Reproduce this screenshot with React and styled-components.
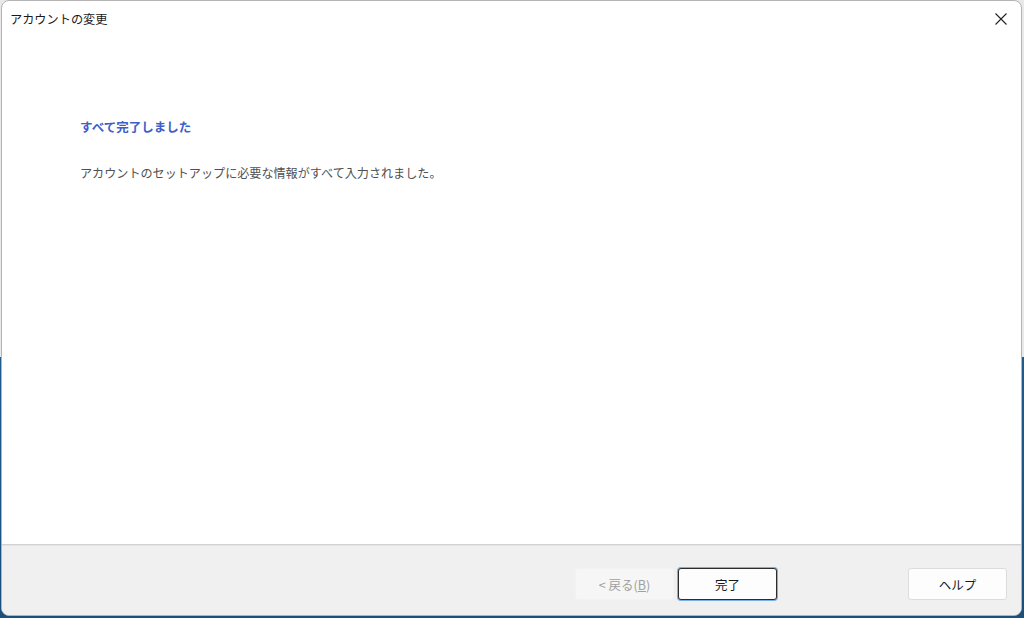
import styled, { createGlobalStyle } from "styled-components";

const GlobalStyle = createGlobalStyle`
  html, body {
    margin: 0;
    padding: 0;
  }
  body {
    font-family: "Noto Sans CJK JP", "Noto Sans", sans-serif;
    background: linear-gradient(to bottom, #e9e9e9 0, #e9e9e9 357px, #1f5b8e 357px, #1b4f7d 100%);
  }
`;

const Desktop = styled.div`
  width: 1024px;
  height: 618px;
  box-sizing: border-box;
  padding: 0 2px 2px 1px;
  display: flex;
`;

const Window = styled.div`
  flex: 1;
  display: flex;
  flex-direction: column;
  background: #fff;
  border: 1px solid #b4b4b4;
  border-radius: 8px;
  overflow: hidden;
`;

const TitleBar = styled.div`
  height: 36px;
  flex: none;
  display: flex;
  align-items: center;
  justify-content: space-between;
  padding: 0 0 0 8px;
  font-size: 12.2px;
  color: #1a1a1a;
`;

const CloseButton = styled.div`
  width: 40px;
  height: 36px;
  display: flex;
  align-items: center;
  justify-content: center;
`;

const Content = styled.div`
  flex: 1;
  padding: 80px 0 0 78px;
  display: flex;
  flex-direction: column;
  gap: 27px;
`;

const Heading = styled.div`
  font-size: 12.5px;
  font-weight: 700;
  color: #3c60c8;
  line-height: 20px;
`;

const Body = styled.div`
  font-size: 12.1px;
  color: #505050;
  line-height: 18px;
`;

const Footer = styled.div`
  height: 71px;
  flex: none;
  background: #f0f0f0;
  border-top: 1px solid #d2d2d2;
  box-shadow: inset 0 1px 0 #e4e4e4;
  display: flex;
  align-items: flex-start;
  padding: 23px 14px 0 0;
  box-sizing: border-box;
`;

const Button = styled.button`
  width: 99px;
  height: 32px;
  box-sizing: border-box;
  font-family: inherit;
  font-size: 12.5px;
  border-radius: 3px;
  margin-left: ${(p) => p.$gap || 0}px;
  background: ${(p) => (p.$disabled ? "#f6f6f6" : "#fdfdfd")};
  color: ${(p) => (p.$disabled ? "#a0a0a0" : "#1a1a1a")};
  border: 1px solid ${(p) => (p.$disabled ? "#f2f2f2" : p.$focused ? "#2c2c2c" : "#dcdcdc")};
  box-shadow: ${(p) => (p.$focused ? "0 0 0 1px #7eaee0" : "none")};
  padding: 0;
`;

export default function App() {
  return (
    <>
      <GlobalStyle />
      <Desktop>
        <Window>
          <TitleBar>
            <span>アカウントの変更</span>
            <CloseButton>
              <svg width="12" height="12" viewBox="0 0 12 12">
                <path d="M0.5 0.5 L11.5 11.5 M11.5 0.5 L0.5 11.5" stroke="#222" strokeWidth="1.1" />
              </svg>
            </CloseButton>
          </TitleBar>
          <Content>
            <Heading>すべて完了しました</Heading>
            <Body>アカウントのセットアップに必要な情報がすべて入力されました。</Body>
          </Content>
          <Footer>
            <Button $disabled $gap={573}>&lt;&nbsp;戻る(<u>B</u>)</Button>
            <Button $focused $gap={4}>完了</Button>
            <Button $gap={131}>ヘルプ</Button>
          </Footer>
        </Window>
      </Desktop>
    </>
  );
}
